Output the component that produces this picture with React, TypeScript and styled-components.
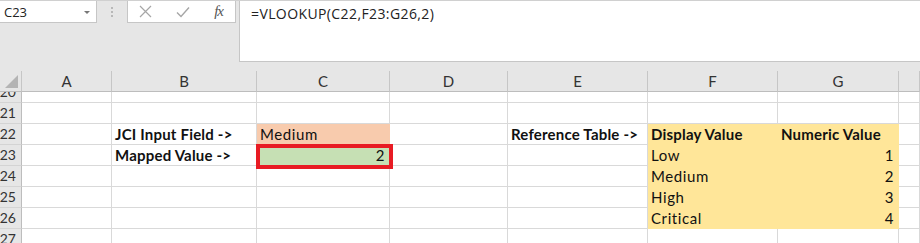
import React from "react";
import styled, { createGlobalStyle } from "styled-components";

const GlobalStyle = createGlobalStyle`
  html, body {
    margin: 0;
    padding: 0;
    background: #e6e6e6;
    overflow: hidden;
  }
`;

// widths of row header + columns A..H
const COLS = "22px 90px 145px 133px 118px 140px 130px 121px 1fr";
const CELL_FONT = `"Lato", "Liberation Sans", sans-serif`;

const Page = styled.div`
  width: 920px;
  height: 243px;
  overflow: hidden;
  background: #e6e6e6;
`;

// Formula bar area
const FormulaArea = styled.div`
  display: flex;
  align-items: flex-start;
  height: 71px;
  border-top: 1px solid #d0d0d0;
  box-sizing: border-box;
`;

const NameBox = styled.div`
  width: 98px;
  height: 22px;
  margin-left: -1px;
  background: white;
  border: 1px solid #c6c6c6;
  border-top: none;
  display: flex;
  align-items: center;
  justify-content: space-between;
  padding: 0 6px 0 4px;
  box-sizing: border-box;
  font-family: "Open Sans", "Liberation Sans", sans-serif;
  font-size: 13px;
  color: #222;
`;

const Caret = styled.span`
  width: 0;
  height: 0;
  border-left: 3px solid transparent;
  border-right: 3px solid transparent;
  border-top: 3px solid #777;
  margin-top: 1px;
`;

const Grip = styled.div`
  width: 30px;
  height: 22px;
  display: flex;
  flex-direction: column;
  align-items: center;
  justify-content: center;
  gap: 2px;
`;

const GripDot = styled.span`
  width: 2px;
  height: 2px;
  background: #b8b8b8;
`;

const ButtonBox = styled.div`
  width: 109px;
  height: 22px;
  background: white;
  border: 1px solid #c6c6c6;
  border-top: none;
  display: flex;
  align-items: center;
  justify-content: space-between;
  padding: 0 12px 0 11px;
  box-sizing: border-box;
`;

const Fx = styled.span`
  font-family: "Liberation Serif", serif;
  font-style: italic;
  font-size: 15px;
  color: #555;
  letter-spacing: -1px;
`;

const FormulaInput = styled.div`
  flex: 1;
  height: 61px;
  margin-left: 3px;
  background: white;
  border-left: 1px solid #c6c6c6;
  border-bottom: 1px solid #c6c6c6;
  box-sizing: border-box;
  padding: 3px 0 0 11px;
  font-family: "Open Sans", "Liberation Sans", sans-serif;
  font-size: 14px;
  letter-spacing: 0.4px;
  color: #222;
`;

// Sheet grid
const Sheet = styled.div`
  display: grid;
  grid-template-columns: ${COLS};
  background: white;
`;

const ColHead = styled.div`
  height: 21px;
  background: #e6e6e6;
  border-right: 1px solid #c6c6c6;
  border-bottom: 1px solid #bdbdbd;
  box-sizing: border-box;
  display: flex;
  align-items: center;
  justify-content: center;
  font-family: ${CELL_FONT};
  font-size: 15px;
  color: #333;
  position: relative;
`;

const Triangle = styled.span`
  position: absolute;
  right: 3px;
  bottom: 3px;
  width: 0;
  height: 0;
  border-left: 13px solid transparent;
  border-bottom: 13px solid #b4b4b4;
`;

const RowHead = styled.div<{ $h: number }>`
  height: ${(p) => p.$h}px;
  background: #e6e6e6;
  border-right: 1px solid #bdbdbd;
  border-bottom: 1px solid #d4d4d4;
  box-sizing: border-box;
  display: flex;
  align-items: flex-end;
  justify-content: flex-end;
  padding: 0 5px 1px 0;
  font-family: ${CELL_FONT};
  font-size: 14px;
  line-height: 18px;
  color: #333;
  overflow: hidden;
`;

const Cell = styled.div<{ $h: number; $bg?: string; $bold?: boolean; $right?: boolean; $mark?: boolean }>`
  height: ${(p) => p.$h}px;
  background: ${(p) => p.$bg || "white"};
  border-right: 1px solid ${(p) => p.$bg || "#d9d9d9"};
  border-bottom: 1px solid ${(p) => p.$bg || "#d9d9d9"};
  box-sizing: border-box;
  display: flex;
  align-items: flex-end;
  justify-content: ${(p) => (p.$right ? "flex-end" : "flex-start")};
  padding: 0 4px 1px 3px;
  font-family: ${CELL_FONT};
  font-size: 15px;
  line-height: 18px;
  font-weight: ${(p) => (p.$bold ? 700 : 400)};
  letter-spacing: ${(p) => (p.$bold ? "0.2px" : "0.6px")};
  color: #111;
  white-space: nowrap;
  position: relative;
  z-index: ${(p) => (p.$mark ? 2 : "auto")};
  ${(p) =>
    p.$mark &&
    `
    &::after {
      content: "";
      position: absolute;
      left: -1px;
      top: -1px;
      right: -4px;
      bottom: -4px;
      border: 4px solid #e81b23;
      pointer-events: none;
    }
  `}
`;

type CellData = { text?: string; bg?: string; bold?: boolean; right?: boolean; mark?: boolean };

const YELLOW = "#ffe699";
const PEACH = "#f8cbad";
const GREEN = "#c6e0b4";

const rows: { n: number; h: number; cells: Record<number, CellData> }[] = [
  { n: 20, h: 11, cells: {} },
  { n: 21, h: 21, cells: {} },
  {
    n: 22,
    h: 21,
    cells: {
      1: { text: "JCI Input Field ->", bold: true },
      2: { text: "Medium", bg: PEACH },
      4: { text: "Reference Table ->", bold: true },
      5: { text: "Display Value", bold: true, bg: YELLOW },
      6: { text: "Numeric Value", bold: true, bg: YELLOW },
    },
  },
  {
    n: 23,
    h: 21,
    cells: {
      1: { text: "Mapped Value ->", bold: true },
      2: { text: "2", bg: GREEN, right: true, mark: true },
      5: { text: "Low", bg: YELLOW },
      6: { text: "1", bg: YELLOW, right: true },
    },
  },
  { n: 24, h: 21, cells: { 5: { text: "Medium", bg: YELLOW }, 6: { text: "2", bg: YELLOW, right: true } } },
  { n: 25, h: 21, cells: { 5: { text: "High", bg: YELLOW }, 6: { text: "3", bg: YELLOW, right: true } } },
  { n: 26, h: 21, cells: { 5: { text: "Critical", bg: YELLOW }, 6: { text: "4", bg: YELLOW, right: true } } },
  { n: 27, h: 21, cells: {} },
];

const letters = ["A", "B", "C", "D", "E", "F", "G", ""];

const CrossIcon = () => (
  <svg width="13" height="13" viewBox="0 0 13 13">
    <path d="M1 1 L12 12 M12 1 L1 12" stroke="#a6a6a6" strokeWidth="1.2" fill="none" />
  </svg>
);

const CheckIcon = () => (
  <svg width="14" height="12" viewBox="0 0 14 12">
    <path d="M1 6.5 L5 10.5 L13 1.5" stroke="#a6a6a6" strokeWidth="1.4" fill="none" />
  </svg>
);

export default function App() {
  return (
    <Page>
      <GlobalStyle />
      <FormulaArea>
        <NameBox>
          <span>C23</span>
          <Caret />
        </NameBox>
        <Grip>
          <GripDot />
          <GripDot />
          <GripDot />
        </Grip>
        <ButtonBox>
          <CrossIcon />
          <CheckIcon />
          <Fx>fx</Fx>
        </ButtonBox>
        <FormulaInput>=VLOOKUP(C22,F23:G26,2)</FormulaInput>
      </FormulaArea>
      <Sheet>
        <ColHead>
          <Triangle />
        </ColHead>
        {letters.map((l, i) => (
          <ColHead key={i}>{l}</ColHead>
        ))}
        {rows.map((r) => (
          <React.Fragment key={r.n}>
            <RowHead $h={r.h}>{r.n}</RowHead>
            {letters.map((_, i) => {
              const c = r.cells[i] || {};
              return (
                <Cell key={i} $h={r.h} $bg={c.bg} $bold={c.bold} $right={c.right} $mark={c.mark}>
                  {c.text}
                </Cell>
              );
            })}
          </React.Fragment>
        ))}
      </Sheet>
    </Page>
  );
}
